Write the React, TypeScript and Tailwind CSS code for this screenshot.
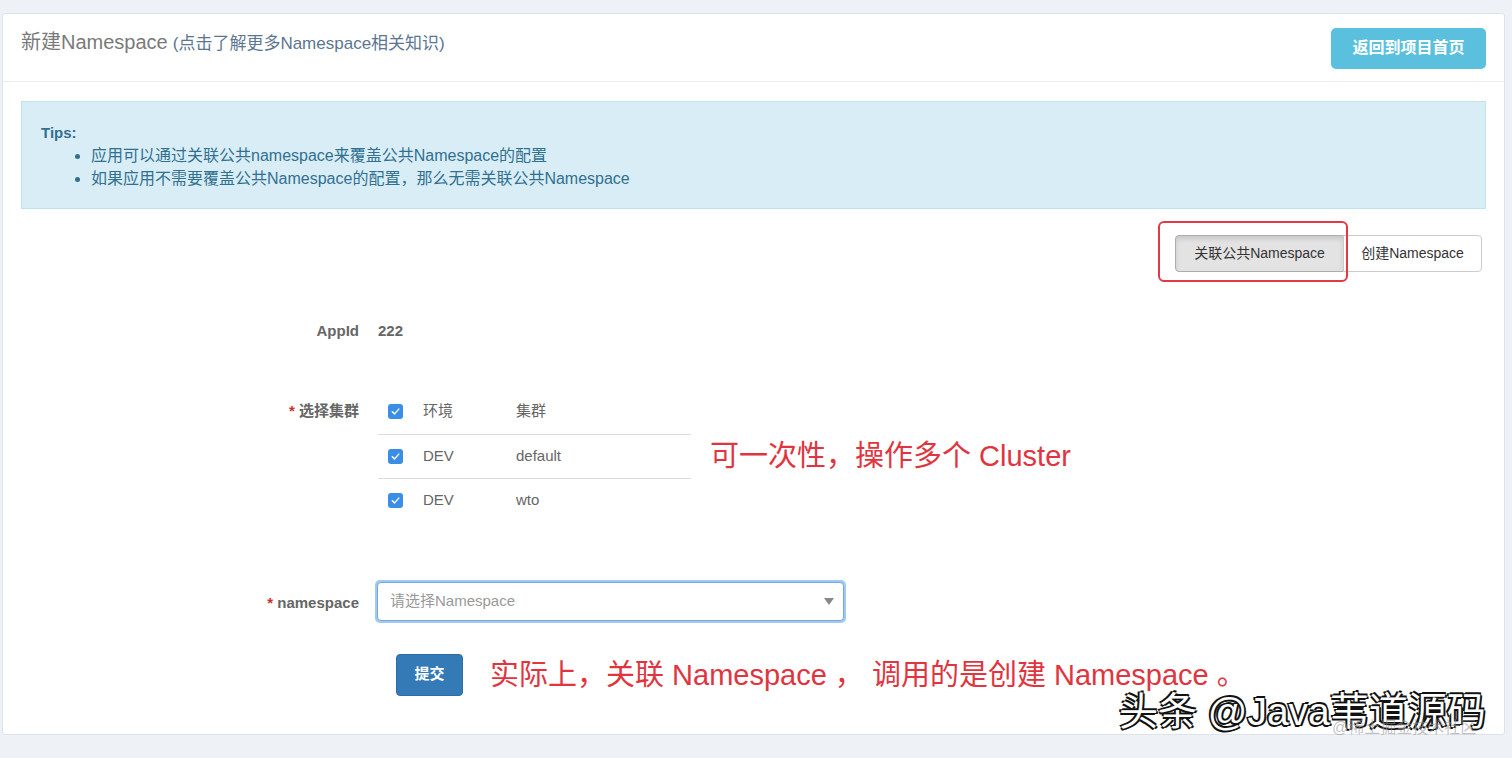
import React from "react";

const FONT = { fontFamily: '"Liberation Sans", "Noto Sans CJK SC", sans-serif' };

function Check() {
  return (
    <span className="flex h-[15px] w-[15px] items-center justify-center rounded-[3px] bg-[#3a8ee6]">
      <svg width="11" height="11" viewBox="0 0 12 12" fill="none">
        <path d="M2.5 6.3 L5 8.6 L9.6 3.4" stroke="white" strokeWidth="1.6" strokeLinecap="round" strokeLinejoin="round" />
      </svg>
    </span>
  );
}

function Row({ env, cluster, border }: { env: string; cluster: string; border?: boolean }) {
  return (
    <div className={`flex h-[44px] items-center ${border ? "border-t border-[#dcdcdc]" : ""}`}>
      <div className="w-[45px] pl-[10px]">
        <Check />
      </div>
      <div className="w-[93px] text-[15px] text-[#666]">{env}</div>
      <div className="text-[15px] text-[#666]">{cluster}</div>
    </div>
  );
}

export default function App() {
  return (
    <div className="relative h-[758px] w-[1512px] overflow-hidden bg-[#eef1f6] pt-[13px]" style={FONT}>
      <div className="ml-[2px] mr-[7px] h-[722px] rounded-[3px] border border-[#dde3ea] bg-white">
        {/* header */}
        <div className="flex h-[68px] items-center justify-between border-b border-[#eceff3] pl-[18px] pr-[18px]">
          <div className="flex items-baseline -mt-[12px]">
            <span className="text-[20px] text-[#7a7a7a]">新建Namespace</span>
            <span className="ml-[5px] text-[17px] text-[#5c7690]">(点击了解更多Namespace相关知识)</span>
          </div>
          <button className="mt-[1px] h-[41px] w-[155px] rounded-[5px] bg-[#5bc0de] text-[16px] font-bold text-white">
            返回到项目首页
          </button>
        </div>

        {/* tips */}
        <div className="mx-[18px] mt-[19px] h-[108px] border border-[#bfe4f0] bg-[#d9edf7] pl-[19px] pt-[21px] text-[#31708f]">
          <div className="text-[15px] font-bold leading-[20px]">Tips:</div>
          <ul className="mt-[1px] list-disc pl-[50px] text-[16px] leading-[23px]">
            <li>应用可以通过关联公共namespace来覆盖公共Namespace的配置</li>
            <li>如果应用不需要覆盖公共Namespace的配置，那么无需关联公共Namespace</li>
          </ul>
        </div>

        {/* mode switch */}
        <div className="mr-[22px] mt-[26px] flex justify-end">
          <div className="relative flex">
            <div className="pointer-events-none absolute -left-[17px] -top-[14px] h-[61px] w-[190px] rounded-[6px] border-[2.5px] border-[#e23a44]" />
            <button className="h-[37px] w-[169px] rounded-l-[4px] border border-[#adadad] bg-[#e3e3e3] text-[14px] text-[#333] shadow-[inset_0_3px_5px_rgba(0,0,0,0.12)]">
              关联公共Namespace
            </button>
            <button className="-ml-px h-[37px] w-[139px] rounded-r-[4px] border border-[#cccccc] bg-white text-[14px] text-[#333]">
              创建Namespace
            </button>
          </div>
        </div>

        {/* form */}
        <div className="mt-[48px] flex flex-col">
          <div className="flex items-center">
            <div className="w-[356px] text-right text-[15px] font-bold text-[#666]">AppId</div>
            <div className="ml-[19px] text-[15px] font-bold text-[#666]">222</div>
          </div>

          <div className="mt-[55px] flex">
            <div className="w-[356px] pt-[2px] text-right text-[15px] font-bold text-[#666]">
              <span className="text-[#c9302c]">*</span> 选择集群
            </div>
            <div className="ml-[19px] w-[313px] -mt-[8px]">
              <Row env="环境" cluster="集群" />
              <Row env="DEV" cluster="default" border />
              <Row env="DEV" cluster="wto" border />
            </div>
            <div className="ml-[19px] mt-[44px] text-[29px] leading-none text-[#e0353f]">可一次性，操作多个 Cluster</div>
          </div>

          <div className="mt-[58px] flex items-center">
            <div className="w-[356px] pt-[4px] text-right text-[15px] font-bold text-[#666]">
              <span className="text-[#c9302c]">*</span> namespace
            </div>
            <div className="ml-[16px] h-[43px] w-[471px] rounded-[5px] bg-[#9ecaf5] p-[2px]">
              <div className="flex h-full items-center justify-between rounded-[4px] border border-[#7aa7d6] bg-white pl-[12px] pr-[9px]">
                <span className="text-[15px] text-[#999]">请选择Namespace</span>
                <svg width="10" height="7" viewBox="0 0 10 7">
                  <path d="M0 0 L10 0 L5 7 Z" fill="#888" />
                </svg>
              </div>
            </div>
          </div>

          <div className="mt-[31px] flex items-center">
            <button className="ml-[393px] h-[42px] w-[67px] rounded-[4px] border border-[#2e6da4] bg-[#337ab7] text-[15px] font-bold text-white">
              提交
            </button>
            <div className="ml-[27px] mt-[1px] text-[29px] leading-none text-[#e0353f]">
              实际上，关联 Namespace ， 调用的是创建 Namespace 。
            </div>
          </div>
        </div>
      </div>

      {/* watermark */}
      <div className="pointer-events-none absolute left-[1119px] top-[692px]">
        <span
          className="text-[39px] leading-none text-white"
          style={{ textShadow: "-2px -1px 0 #111, 2px 1px 0 #111, -1px 2px 0 #111, 1px -2px 0 #111" }}
        >
          头条 @Java苇道源码
        </span>
      </div>
      <div className="pointer-events-none absolute left-[1332px] top-[720px] text-[16px] leading-none text-[#999]/60">
        @稀土掘金技术社区
      </div>
    </div>
  );
}
